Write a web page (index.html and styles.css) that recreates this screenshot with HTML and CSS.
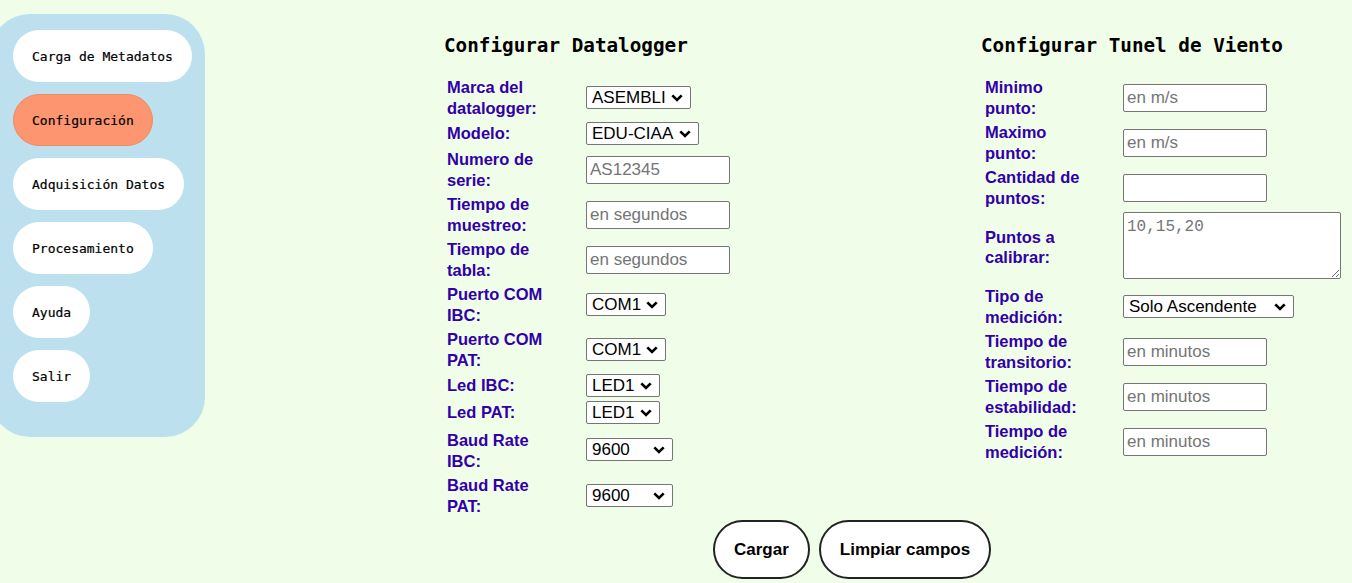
FILE: index.html
```html
<!DOCTYPE html>
<html lang="es">
<head>
<meta charset="utf-8">
<title>Configuración</title>
<link rel="stylesheet" href="styles.css">
</head>
<body>
<div class="page">
  <nav class="sidebar">
    <a class="nav-btn">Carga de Metadatos</a>
    <a class="nav-btn active">Configuración</a>
    <a class="nav-btn">Adquisición Datos</a>
    <a class="nav-btn">Procesamiento</a>
    <a class="nav-btn">Ayuda</a>
    <a class="nav-btn">Salir</a>
  </nav>
  <main class="main">
    <div class="columns">
      <section class="col col-left">
        <h2 class="title">Configurar Datalogger</h2>
        <div class="form-grid">
          <label class="lbl">Marca del datalogger:</label>
          <select class="sel w-asembli"><option>ASEMBLI</option></select>
          <label class="lbl">Modelo:</label>
          <select class="sel w-edu"><option>EDU-CIAA</option></select>
          <label class="lbl">Numero de serie:</label>
          <input class="txt" type="text" placeholder="AS12345">
          <label class="lbl">Tiempo de muestreo:</label>
          <input class="txt" type="text" placeholder="en segundos">
          <label class="lbl">Tiempo de tabla:</label>
          <input class="txt" type="text" placeholder="en segundos">
          <label class="lbl">Puerto COM IBC:</label>
          <select class="sel w-com"><option>COM1</option></select>
          <label class="lbl">Puerto COM PAT:</label>
          <select class="sel w-com"><option>COM1</option></select>
          <label class="lbl">Led IBC:</label>
          <select class="sel w-led"><option>LED1</option></select>
          <label class="lbl">Led PAT:</label>
          <select class="sel w-led"><option>LED1</option></select>
          <label class="lbl row-gap-extra">Baud Rate IBC:</label>
          <select class="sel w-baud row-gap-extra"><option>9600</option></select>
          <label class="lbl">Baud Rate PAT:</label>
          <select class="sel w-baud"><option>9600</option></select>
        </div>
      </section>
      <section class="col col-right">
        <h2 class="title">Configurar Tunel de Viento</h2>
        <div class="form-grid">
          <label class="lbl">Minimo punto:</label>
          <input class="txt" type="text" placeholder="en m/s">
          <label class="lbl">Maximo punto:</label>
          <input class="txt" type="text" placeholder="en m/s">
          <label class="lbl">Cantidad de puntos:</label>
          <input class="txt" type="text">
          <label class="lbl">Puntos a calibrar:</label>
          <textarea class="area" placeholder="10,15,20"></textarea>
          <label class="lbl">Tipo de medición:</label>
          <select class="sel w-tipo"><option>Solo Ascendente</option></select>
          <label class="lbl">Tiempo de transitorio:</label>
          <input class="txt" type="text" placeholder="en minutos">
          <label class="lbl">Tiempo de estabilidad:</label>
          <input class="txt" type="text" placeholder="en minutos">
          <label class="lbl">Tiempo de medición:</label>
          <input class="txt" type="text" placeholder="en minutos">
        </div>
      </section>
    </div>
    <div class="actions">
      <button class="action-btn" type="button">Cargar</button>
      <button class="action-btn" type="button">Limpiar campos</button>
    </div>
  </main>
</div>
</body>
</html>
```
FILE: styles.css
```css
html, body {
  margin: 0;
  padding: 0;
}
body {
  background: #f0fee9;
  font-family: "Liberation Sans", Arial, sans-serif;
  width: 1352px;
  height: 583px;
  overflow: hidden;
}
.page {
  display: flex;
  align-items: flex-start;
}
.sidebar {
  margin-top: 14px;
  margin-left: -10px;
  width: 215px;
  height: 423px;
  box-sizing: border-box;
  padding: 16px 0 0 23px;
  background: #bce0ee;
  border-radius: 40px;
  display: flex;
  flex-direction: column;
  align-items: flex-start;
  gap: 12px;
}
.nav-btn {
  display: flex;
  align-items: center;
  height: 52px;
  box-sizing: border-box;
  padding: 0 19px;
  background: #ffffff;
  border-radius: 26px;
  font-family: "DejaVu Sans Mono", "Liberation Mono", monospace;
  font-size: 13px;
  color: #000;
  white-space: nowrap;
  -webkit-text-stroke: 0.2px #000;
}
.nav-btn.active {
  background: #fd9571;
  border: 1px solid #f5895f;
  padding: 0 18px;
}
.main {
  margin-left: 239px;
  display: flex;
  flex-direction: column;
}
.columns {
  display: flex;
  align-items: flex-start;
}
.col-left {
  width: 537px;
}
.col-right {
  width: 370px;
}
.title {
  margin: 35px 0 0 0;
  font-family: "DejaVu Sans Mono", "Liberation Mono", monospace;
  font-weight: bold;
  font-size: 19.3px;
  line-height: 22px;
  color: #000;
  white-space: nowrap;
}
.form-grid {
  margin-top: 20px;
  margin-left: 3px;
  display: grid;
  grid-template-columns: 104px auto;
  column-gap: 35px;
  row-gap: 4px;
  align-items: center;
  justify-items: start;
}
.col-right .form-grid {
  margin-left: 4px;
  column-gap: 34px;
}
.lbl {
  font-weight: bold;
  font-size: 16.5px;
  line-height: 20.5px;
  color: #3100a8;
}
.row-gap-extra {
  margin-top: 2px;
}
.txt {
  width: 144px;
  height: 28px;
  box-sizing: border-box;
  margin: 0;
  padding: 1px 3px;
  border: 1px solid #767676;
  border-radius: 2px;
  background: #fff;
  font-family: "Liberation Sans", Arial, sans-serif;
  font-size: 17px;
  color: #000;
}
.txt::placeholder {
  color: #757575;
}
.area {
  width: 218px;
  height: 67px;
  box-sizing: border-box;
  margin: 0 0 3px 0;
  padding: 5px 3px;
  border: 1px solid #767676;
  border-radius: 2px;
  background: #fff;
  font-family: "Liberation Mono", monospace;
  font-size: 16px;
  resize: both;
}
.area::placeholder {
  color: #757575;
}
.sel {
  -webkit-appearance: none;
  appearance: none;
  height: 23px;
  box-sizing: border-box;
  margin: 0;
  padding: 0 0 0 5px;
  border: 1px solid #767676;
  border-radius: 2px;
  background-color: #fff;
  background-image: url("data:image/svg+xml;utf8,<svg xmlns='http://www.w3.org/2000/svg' viewBox='0 0 12 8'><path d='M1.3 1.3 L6 6 L10.7 1.3' fill='none' stroke='black' stroke-width='2.6'/></svg>");
  background-repeat: no-repeat;
  background-size: 12px 8px;
  background-position: right 7px center;
  font-family: "Liberation Sans", Arial, sans-serif;
  font-size: 17px;
  line-height: 21px;
  color: #000;
}
.w-asembli { width: 105px; }
.w-edu { width: 113px; }
.w-com { width: 80px; }
.w-led { width: 74px; }
.w-baud { width: 87px; }
.w-tipo { width: 171px; }
.actions {
  margin-top: 4px;
  margin-left: 269px;
  display: flex;
  gap: 9px;
}
.action-btn {
  height: 59px;
  box-sizing: border-box;
  padding: 0 19px;
  border: 2px solid #222;
  border-radius: 30px;
  background: #fff;
  font-family: "Liberation Sans", Arial, sans-serif;
  font-weight: bold;
  font-size: 17px;
  color: #000;
}
```
